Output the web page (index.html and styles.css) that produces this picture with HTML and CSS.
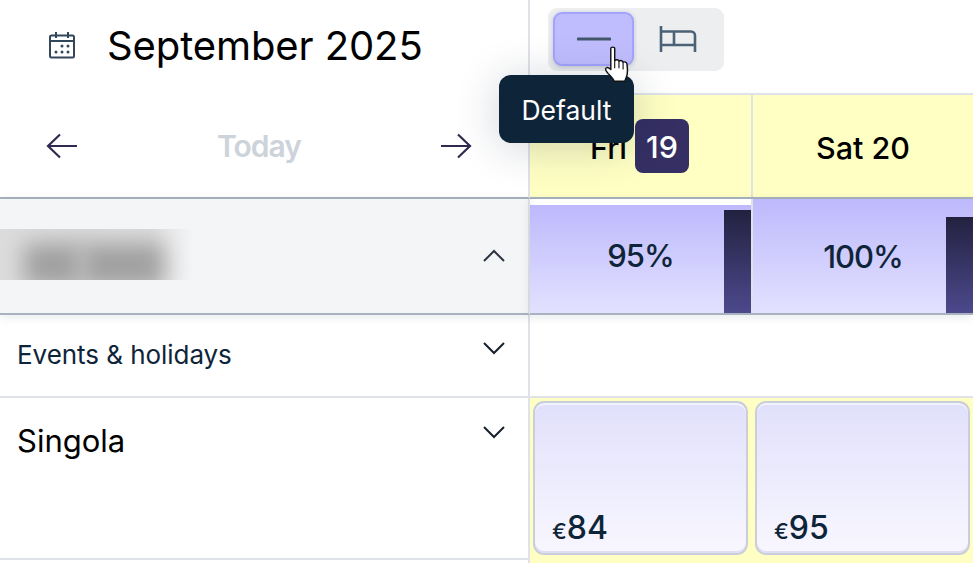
FILE: index.html
```html
<!DOCTYPE html>
<html lang="en">
  <head>
    <meta charset="UTF-8" />
    <title>Calendar</title>
    <link rel="stylesheet" href="styles.css">
  </head>
  <body>
    <div class="calendar">
      <div class="side-head">
        <div class="month">
          <svg class="month-icon" width="28" height="28" viewBox="0 0 28 28" fill="none" stroke="#33475b" stroke-width="2">
            <rect x="2" y="4.500" width="24" height="22" rx="1.500" />
            <path d="M2 10h24M8 1v6M20 1v6" />
            <g fill="#33475b" stroke="none">
              <circle cx="14" cy="15" r="1.500" />
              <circle cx="20" cy="15" r="1.500" />
              <circle cx="8" cy="21" r="1.500" />
              <circle cx="14" cy="21" r="1.500" />
              <circle cx="20" cy="21" r="1.500" />
            </g>
          </svg>
          <span class="month-name">September 2025</span>
        </div>
        <div class="pager">
          <svg width="32" height="26" viewBox="0 0 32 26" fill="none" stroke="#2f2b50" stroke-width="2.200">
            <path d="M31 13H2M14 1.500 2 13l12 11.500" />
          </svg>
          <span class="today">Today</span>
          <svg width="32" height="26" viewBox="0 0 32 26" fill="none" stroke="#2f2b50" stroke-width="2.200">
            <path d="M1 13h29M18 1.500 30 13 18 24.500" />
          </svg>
        </div>
      </div>

      <div class="main-head">
        <div class="toolbar">
          <div class="toggle">
            <div class="toggle-btn active">
              <svg width="34" height="4" viewBox="0 0 34 4"><path d="M1 2h32" stroke="#43586c" stroke-width="3" stroke-linecap="round" /></svg>
            </div>
            <div class="toggle-btn">
              <svg width="38" height="28" viewBox="0 0 38 28" fill="none" stroke="#4b6175" stroke-width="2.600">
                <path d="M2 1v26M2 6.500h30a4 4 0 0 1 4 4V27M2 20h34M15 6.500V20" />
              </svg>
            </div>
          </div>
        </div>
        <div class="days">
          <div class="day">
            <span>Fri</span>
            <span class="day-num">19</span>
          </div>
          <div class="day">Sat 20</div>
        </div>
      </div>

      <div class="side-cell occupancy-label">
        <div class="blurred"><i></i><i></i></div>
        <svg class="chevron" width="24" height="14" viewBox="0 0 24 14" fill="none" stroke="#2b3440" stroke-width="2"><path d="M2 12 12 2l10 10" /></svg>
      </div>
      <div class="occupancy">
        <div class="occ-cell partial">
          <div class="occ-fill">95%<span class="occ-bar short"></span></div>
        </div>
        <div class="occ-cell">
          <div class="occ-fill">100%<span class="occ-bar"></span></div>
        </div>
      </div>

      <div class="side-cell events-label">
        <span>Events &amp; holidays</span>
        <svg class="chevron" width="24" height="14" viewBox="0 0 24 14" fill="none" stroke="#17212b" stroke-width="2"><path d="M2 2l10 10L22 2" /></svg>
      </div>
      <div class="events"></div>

      <div class="side-cell room-label">
        <span>Singola</span>
        <svg class="chevron" width="24" height="14" viewBox="0 0 24 14" fill="none" stroke="#17212b" stroke-width="2"><path d="M2 2l10 10L22 2" /></svg>
      </div>
      <div class="rooms">
        <div class="price-card"><span class="price"><small>€</small>84</span></div>
        <div class="price-card"><span class="price"><small>€</small>95</span></div>
      </div>
      <div class="bottom-left"></div>
      <div class="bottom-right"></div>
    </div>

    <div class="tooltip">Default</div>
    <svg class="cursor" width="27" height="38" viewBox="0 0 24 34">
      <path d="M6 2.500c0-2 3.500-2 3.500 0V13c1.500-1 3.300-.8 3.800.5 1.500-.9 3.300-.4 3.700 1 1.500-.7 3.300 0 3.500 1.700.4 3 .7 6 .2 9-.4 2.200-1.200 4-2.200 6.300H9c-1-2.500-3.500-4.800-5.500-7C2.300 23 1 21.800 1.300 20.500c.3-1.300 1.800-1.500 3-.8L6 21z" fill="#fff" stroke="#111" stroke-width="1.300" stroke-linejoin="round" />
      <path d="M9.500 13v7M13.300 13.500V20M17 14.500V21" stroke="#111" stroke-width="1" fill="none" />
    </svg>
  </body>
</html>
```

FILE: styles.css
```css
* {
  box-sizing: border-box;
}

html,
body {
  margin: 0;
  height: 100%;
  overflow: hidden;
}

body {
  position: relative;
  background: #fff;
  font-family: Inter, "Liberation Sans", sans-serif;
  color: #0e2539;
}

.calendar {
  display: grid;
  grid-template-columns: 530px 443px;
  grid-template-rows: 199px 116px 83px 162px 10px;
}

.side-head {
  display: flex;
  flex-direction: column;
  border-right: 2px solid #dfe3e8;
  border-bottom: 2px solid #a8b3bf;
}

.month {
  display: flex;
  align-items: center;
  height: 90px;
  padding-left: 48px;
  gap: 31px;
}

.month-name {
  font-size: 40px;
  letter-spacing: -0.1px;
  color: #000;
}

.pager {
  display: flex;
  align-items: center;
  justify-content: space-between;
  flex: 1;
  padding: 5px 56px 0 46px;
}

.today {
  font-size: 30px;
  font-weight: 600;
  letter-spacing: -1px;
  color: #cdd3da;
}

.main-head {
  display: flex;
  flex-direction: column;
  border-bottom: 2px solid #a8b3bf;
}

.toolbar {
  height: 95px;
  padding: 8px 0 0 18px;
  border-bottom: 2px solid #dfe3e8;
}

.toggle {
  display: flex;
  width: 176px;
  height: 63px;
  padding: 4px 5px;
  background: #eceef0;
  border-radius: 9px;
}

.toggle-btn {
  display: flex;
  align-items: center;
  justify-content: center;
  width: 81px;
  height: 54px;
  border: 2px solid transparent;
  border-radius: 9px;
}

.toggle-btn + .toggle-btn {
  width: 85px;
  padding-left: 3px;
}

.toggle-btn.active {
  background: #c0bdff;
  border-color: #a5a3ff;
  box-shadow: 0 1px 4px rgba(14, 37, 57, 0.2);
}

.days {
  display: grid;
  grid-template-columns: 223px 220px;
  flex: 1;
}

.day {
  display: flex;
  align-items: center;
  justify-content: center;
  gap: 8px;
  padding: 2px 2px 0 0;
  background: #ffffc4;
  border-right: 2px solid #dfe3e8;
  font-size: 30.500px;
  font-weight: 500;
  color: #000;
}

.day:last-child {
  padding-right: 0;
  border-right: 0;
}

.day-num {
  display: flex;
  align-items: center;
  justify-content: center;
  width: 54px;
  height: 54px;
  margin-top: -2px;
  background: #352f63;
  border-radius: 8px;
  color: #fff;
}

.side-cell {
  display: flex;
  align-items: flex-start;
  justify-content: space-between;
  padding: 0 22px 0 17px;
  border-right: 2px solid #dfe3e8;
}

.chevron {
  flex: none;
}

.occupancy-label {
  position: relative;
  align-items: center;
  padding-left: 0;
  background: #f4f5f7;
  border-bottom: 2px solid #a8b3bf;
  box-shadow: 0 2px 10px rgba(14, 37, 57, 0.1);
}

.blurred {
  position: relative;
  width: 193px;
  height: 51px;
  margin-bottom: 4px;
  overflow: hidden;
  background: linear-gradient(to right, #dcdcdc 0, #dedede 78%, #f4f5f7 100%);
}

.blurred i {
  position: absolute;
  top: 14px;
  width: 58px;
  height: 44px;
  background: #a0a0a0;
  filter: blur(11px);
}

.blurred i:first-child {
  left: 24px;
}

.blurred i:last-child {
  left: 82px;
  width: 82px;
}

.occupancy {
  position: relative;
  display: grid;
  grid-template-columns: 223px 220px;
  border-bottom: 2px solid #a8b3bf;
  box-shadow: 0 2px 10px rgba(14, 37, 57, 0.1);
}

.occ-cell {
  display: flex;
  flex-direction: column;
  justify-content: flex-end;
  border-right: 2px solid #dfe3e8;
}

.occ-cell:last-child {
  border-right: 0;
}

.occ-cell.partial {
  padding-top: 6px;
}

.occ-fill {
  position: relative;
  display: flex;
  align-items: center;
  justify-content: center;
  height: 100%;
  background: linear-gradient(#bdb9fc, #e3e1ff);
  font-size: 31px;
  font-weight: 500;
  letter-spacing: -1px;
}

.occ-cell.partial .occ-fill {
  padding-bottom: 7px;
}

.occ-bar {
  position: absolute;
  right: 0;
  bottom: 0;
  width: 27px;
  height: 96px;
  background: linear-gradient(#23213f, #4c498d);
}

.occ-bar.short {
  height: 103px;
}

.events-label {
  padding-top: 24px;
  border-bottom: 2px solid #dfe3e8;
  font-size: 26px;
  letter-spacing: -0.05px;
}

.events-label .chevron {
  margin-top: 2px;
}

.events {
  border-bottom: 2px solid #dfe3e8;
}

.room-label {
  padding-top: 24px;
  border-bottom: 2px solid #dfe3e8;
  font-size: 31px;
  color: #000;
}

.room-label .chevron {
  margin-top: 3px;
}

.rooms {
  display: grid;
  grid-template-columns: 214.500px 214.500px;
  gap: 7.500px;
  padding: 3px 0 0 3px;
  background: #ffffc4;
}

.price-card {
  display: flex;
  align-items: flex-end;
  height: 154px;
  padding: 0 0 6px 17px;
  background: linear-gradient(#e1e0fb, #f8f7ff);
  border: 2px solid #c9cfd8;
  border-radius: 11px;
  box-shadow: inset 0 2px 0 #f3f2ff, inset 0 -2px 0 #dfdef5;
}

.price {
  font-size: 32px;
  font-weight: 500;
}

.price small {
  font-size: 22px;
}

.bottom-left {
  border-right: 2px solid #dfe3e8;
}

.bottom-right {
  background: #ffffc4;
}

.tooltip {
  position: absolute;
  left: 499px;
  top: 75px;
  display: flex;
  align-items: center;
  justify-content: center;
  width: 135px;
  height: 68px;
  padding-top: 2px;
  background: #0e2539;
  border-radius: 12px;
  box-shadow: 0 4px 44px rgba(14, 37, 57, 0.2);
  color: #fff;
  font-size: 26.500px;
}

.cursor {
  position: absolute;
  left: 604px;
  top: 46px;
}
```
